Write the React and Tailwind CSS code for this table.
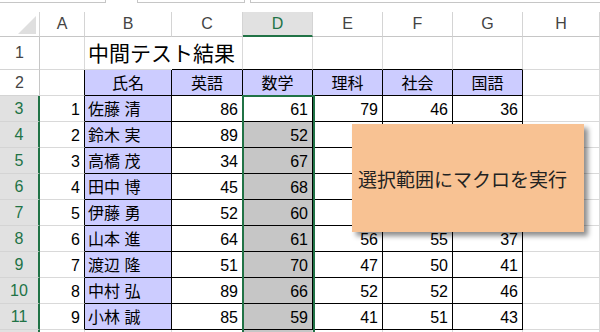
import React from 'react';

const LETTERS = ['A', 'B', 'C', 'D', 'E', 'F', 'G', 'H'];

const SUBJECTS = ['英語', '数学', '理科', '社会', '国語'];

// No, name, English, Math, Science, Social, Japanese
// (rows 4-7 of E:G sit under the macro button and are left blank)
const students = [
  [1, '佐藤 清', 86, 61, 79, 46, 36],
  [2, '鈴木 実', 89, 52, '', '', ''],
  [3, '高橋 茂', 34, 67, '', '', ''],
  [4, '田中 博', 45, 68, '', '', ''],
  [5, '伊藤 勇', 52, 60, '', '', ''],
  [6, '山本 進', 64, 61, 56, 55, 37],
  [7, '渡辺 隆', 51, 70, 47, 50, 41],
  [8, '中村 弘', 89, 66, 52, 52, 46],
  [9, '小林 誠', 85, 59, 41, 51, 43],
];

const font = "font-['Liberation_Sans','Noto_Sans_CJK_JP',sans-serif]";

// table occupies B2:G11
const inTable = (r, c) => r >= 2 && r <= 11 && c >= 2 && c <= 7;

const cellValue = (r, c) => {
  if (r === 2 && c === 2) return '氏名';
  if (r === 2 && c >= 3 && c <= 7) return SUBJECTS[c - 3];
  const s = students[r - 3];
  if (!s || c < 1 || c > 7) return null;
  return s[c - 1];
};

function Cell({ r, c }) {
  const value = cellValue(r, c);
  const right = inTable(r, c) || inTable(r, c + 1) ? 'border-r-black' : 'border-r-[#d9d9d9]';
  const bottom = inTable(r, c) || inTable(r + 1, c) ? 'border-b-black' : 'border-b-[#d9d9d9]';

  let bg = 'bg-white';
  if ((c === 2 && r >= 2 && r <= 11) || (r === 2 && inTable(r, c))) bg = 'bg-[#ccccff]';
  if (c === 4 && r >= 4) bg = 'bg-[#c6c6c6]';

  let align = 'justify-end pr-[4px]';
  if (r === 2) align = 'justify-center';
  else if (c === 2) align = 'justify-start pl-[3px]';

  if (r === 1 && c === 2) {
    return (
      <div className="relative border-r border-b border-r-white border-b-[#d9d9d9] bg-white">
        <span className="absolute left-[3px] top-[1px] whitespace-nowrap text-[21px] leading-[32px] text-black">
          中間テスト結果
        </span>
      </div>
    );
  }

  return (
    <div className={`flex items-center border-r border-b ${right} ${bottom} ${bg} ${align} pt-[2px] text-[16px] text-black`}>
      {value}
    </div>
  );
}

function RowHeader({ r }) {
  const selected = r >= 3;
  return (
    <div
      className={`flex items-center justify-center border-b border-b-[#d4d4d4] text-[16px] ${
        selected
          ? 'border-r-2 border-r-[#217346] bg-[#e1e1e1] text-[#217346]'
          : 'border-r border-r-[#c6c6c6] bg-white text-[#444]'
      }`}
    >
      {r <= 11 ? r : null}
    </div>
  );
}

function ColumnHeader({ letter }) {
  const selected = letter === 'D';
  return (
    <div
      className={`flex items-center justify-center border-r border-r-[#d4d4d4] text-[16px] ${
        selected
          ? 'border-b-2 border-b-[#217346] bg-[#e1e1e1] text-[#217346]'
          : 'border-b border-b-[#c6c6c6] bg-white text-[#444]'
      }`}
    >
      {letter}
    </div>
  );
}

export default function App() {
  const rows = Array.from({ length: 12 }, (_, i) => i + 1);

  return (
    <div className={`relative h-[332px] w-[600px] overflow-hidden bg-white ${font}`}>
      {/* name box and formula bar edges */}
      <div className="flex h-[12px] gap-[5px]">
        <div className="h-[3px] w-[106px] border-r border-b border-[#c6c6c6]" />
        <div className="ml-[26px] h-[3px] w-[108px] border-x border-b border-[#c6c6c6]" />
        <div className="h-[3px] flex-1 border-l border-b border-[#c6c6c6]" />
      </div>

      <div className="grid grid-cols-[40px_45px_87px_71px_70px_70px_70px_70px_77px] grid-rows-[25px_33px_repeat(11,26px)]">
        <div className="relative border-r border-b border-r-[#d4d4d4] border-b-[#c6c6c6] bg-white">
          <svg className="absolute left-[18px] top-[4px]" width="18" height="18" viewBox="0 0 18 18">
            <polygon points="18,0 18,18 0,18" fill="#dfdfdf" />
          </svg>
        </div>
        {LETTERS.map((l) => (
          <ColumnHeader key={l} letter={l} />
        ))}

        {rows.map((r) => (
          <React.Fragment key={r}>
            <RowHeader r={r} />
            {LETTERS.map((l, i) => (
              <Cell key={l} r={r} c={i + 1} />
            ))}
          </React.Fragment>
        ))}
      </div>

      {/* selected range D3:D11 */}
      <div className="pointer-events-none absolute left-[242px] top-[95px] h-[250px] w-[73px] border-2 border-[#217346]" />

      {/* macro button shape */}
      <div className="absolute left-[352px] top-[124px] flex h-[108px] w-[232px] items-center bg-[#f8c293] pl-[6px] pt-[2px] text-[19px] text-[#222] shadow-[4px_4px_5px_rgba(0,0,0,0.45)] font-['Noto_Sans_CJK_JP',sans-serif]">
        選択範囲にマクロを実行
      </div>
    </div>
  );
}
